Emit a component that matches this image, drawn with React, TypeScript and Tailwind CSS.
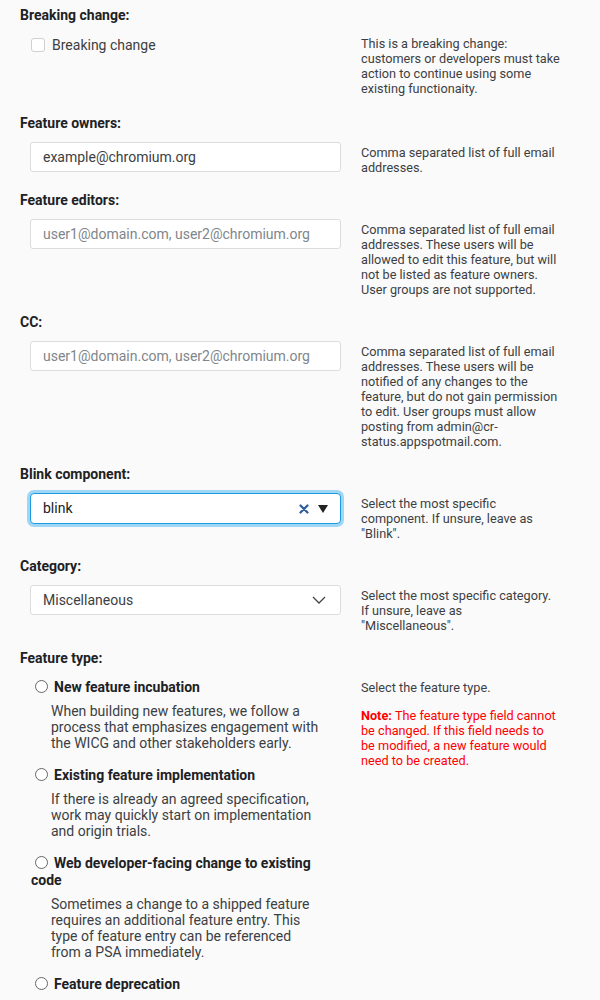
import React from "react";

interface FieldRowProps {
  label: string;
  help: React.ReactNode;
  children: React.ReactNode;
}

function FieldRow(props: FieldRowProps) {
  return (
    <div className="mb-[16px]">
      <div className="text-[14px] font-bold text-[#202124] leading-[18px] mb-[10px]">{props.label}</div>
      <div className="flex">
        <div className="w-[311px] ml-[10px] shrink-0">{props.children}</div>
        <div className="w-[201px] ml-[20px] text-[12.7px] leading-[15px] text-[#3c4043] pt-[3px]">{props.help}</div>
      </div>
    </div>
  );
}

function TextInput(props: { value?: string; placeholder?: string }) {
  return (
    <input
      readOnly
      defaultValue={props.value}
      placeholder={props.placeholder}
      className="w-full h-[30px] px-3 bg-white border border-[#dadce0] rounded-[3px] text-[14px] text-[#3c4043] placeholder:text-[#80868b] outline-none"
    />
  );
}

const featureTypes = [
  {
    title: "New feature incubation",
    desc: "When building new features, we follow a process that emphasizes engagement with the WICG and other stakeholders early.",
  },
  {
    title: "Existing feature implementation",
    desc: "If there is already an agreed specification, work may quickly start on implementation and origin trials.",
  },
  {
    title: "Web developer-facing change to existing code",
    desc: "Sometimes a change to a shipped feature requires an additional feature entry. This type of feature entry can be referenced from a PSA immediately.",
  },
  {
    title: "Feature deprecation",
    desc: "Deprecate and remove an old feature.",
  },
];

export default function App() {
  return (
    <div className="min-h-screen bg-[#fafafa] px-5 pt-[6px] text-[#202124]" style={{ fontFamily: "Roboto, 'Noto Sans', sans-serif" }}>
      {/* Breaking change */}
      <div className="mb-[18px]">
        <div className="text-[14px] font-bold leading-[18px] mb-[12px]">Breaking change:</div>
        <div className="flex">
          <div className="w-[311px] ml-[10px] shrink-0">
            <label className="flex items-center h-[18px] gap-[7px] text-[14px] text-[#3c4043]">
              <span className="w-[14px] h-[14px] ml-[1px] rounded-[3px] border border-[#d0d0d0] bg-white"></span>
              Breaking change
            </label>
          </div>
          <div className="w-[201px] ml-[20px] text-[12.7px] leading-[15px] text-[#3c4043]">
            This is a breaking change: customers or developers must take action to continue using some existing functionaity.
          </div>
        </div>
      </div>

      <FieldRow label="Feature owners:" help="Comma separated list of full email addresses.">
        <TextInput value="example@chromium.org" />
      </FieldRow>

      <FieldRow
        label="Feature editors:"
        help="Comma separated list of full email addresses. These users will be allowed to edit this feature, but will not be listed as feature owners. User groups are not supported."
      >
        <TextInput placeholder="user1@domain.com, user2@chromium.org" />
      </FieldRow>

      <FieldRow
        label="CC:"
        help="Comma separated list of full email addresses. These users will be notified of any changes to the feature, but do not gain permission to edit. User groups must allow posting from admin@cr-status.appspotmail.com."
      >
        <TextInput placeholder="user1@domain.com, user2@chromium.org" />
      </FieldRow>

      <FieldRow label="Blink component:" help={'Select the most specific component. If unsure, leave as "Blink".'}>
        <div className="h-[31px] flex items-center px-3 bg-white border border-[#1a9be0] rounded-[4px] ring-[3px] ring-[#9fd6f6] text-[14px] text-[#202124]">
          <span className="flex-1">blink</span>
          <svg width="10" height="10" viewBox="0 0 10 10" className="mr-[9px]">
            <path d="M1.5 1.5 L8.5 8.5 M8.5 1.5 L1.5 8.5" stroke="#2c5d9c" strokeWidth="2.2" strokeLinecap="round" />
          </svg>
          <svg width="10" height="8" viewBox="0 0 10 8">
            <path d="M0 0 H10 L5 8 Z" fill="#222" />
          </svg>
        </div>
      </FieldRow>

      <FieldRow
        label="Category:"
        help={
          <>
            Select the most specific category. If unsure, leave as
            <br />
            "Miscellaneous".
          </>
        }
      >
        <div className="h-[30px] flex items-center px-3 bg-white border border-[#dadce0] rounded-[3px] text-[14px] text-[#3c4043]">
          <span className="flex-1">Miscellaneous</span>
          <svg width="14" height="8" viewBox="0 0 14 8" className="mr-[2px]">
            <path d="M1 1 L7 7 L13 1" fill="none" stroke="#444" strokeWidth="1.3" />
          </svg>
        </div>
      </FieldRow>

      {/* Feature type */}
      <div>
        <div className="text-[14px] font-bold leading-[18px] mb-[12px]">Feature type:</div>
        <div className="flex">
          <div className="w-[300px] ml-[11px] shrink-0">
            {featureTypes.map((t) => (
              <div key={t.title} className="mb-[16px]">
                <div className="text-[14px] font-bold leading-[17px] text-[#202124]">
                  <span className="inline-block align-[-1px] w-[13px] h-[13px] ml-[4px] mr-[6px] rounded-full border border-[#666] bg-white"></span>
                  {t.title}
                </div>
                <div className="ml-[20px] mt-[7px] w-[270px] text-[14px] leading-[16px] text-[#3c4043]">{t.desc}</div>
              </div>
            ))}
          </div>
          <div className="w-[201px] ml-[30px] text-[12.7px] leading-[15px] text-[#3c4043] pt-[1px]">
            <p>Select the feature type.</p>
            <p className="mt-[13px] w-[197px] text-[#ff0000]">
              <span className="font-bold">Note: </span>The feature type field cannot be changed. If this field needs to be modified, a new feature would need to be created.
            </p>
          </div>
        </div>
      </div>
    </div>
  );
}
